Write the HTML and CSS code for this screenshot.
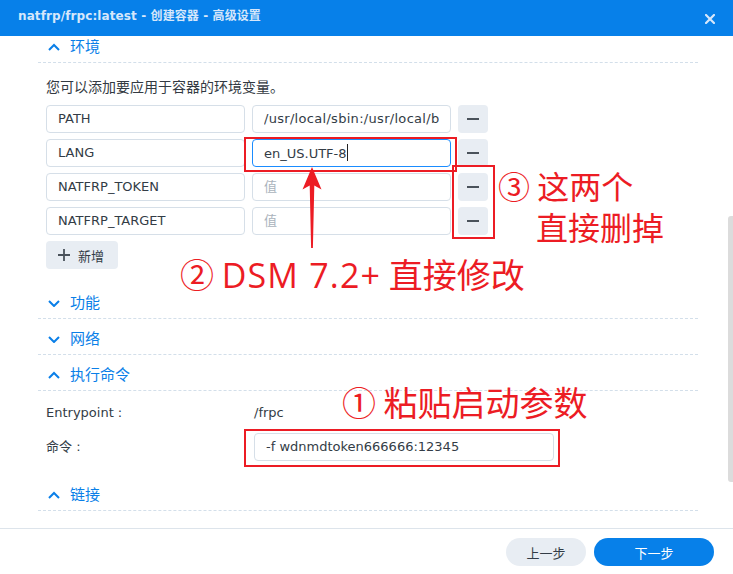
FILE: index.html
```html
<!DOCTYPE html>
<html lang="zh-CN">
<head>
<meta charset="utf-8">
<title>创建容器 - 高级设置</title>
<link rel="stylesheet" href="styles.css">
</head>
<body>
<div class="window">
  <header class="titlebar">
    <span class="title">natfrp/frpc:latest - 创建容器 - 高级设置</span>
    <svg class="close" viewBox="0 0 10 10" width="10" height="10"><path d="M1 1L9 9M9 1L1 9" stroke="currentColor" stroke-width="2.2" stroke-linecap="square"/></svg>
  </header>

  <main class="content">
    <div class="scroll">
      <section class="panel">
        <div class="panel-head"><svg class="chev" viewBox="0 0 12 8" width="12" height="8"><path d="M1 7L6 2L11 7" fill="none" stroke="currentColor" stroke-width="2"/></svg><span>环境</span></div>
        <div class="panel-body env">
          <p class="desc">您可以添加要应用于容器的环境变量。</p>
          <div class="env-list">
            <div class="env-row">
              <div class="field"><span class="val">PATH</span></div>
              <div class="field"><span class="val wide-val">/usr/local/sbin:/usr/local/bin:/usr/sbin:/usr/bin:/sbin:/bin</span></div>
              <button class="icon-btn"><span class="dash"></span></button>
            </div>
            <div class="env-row">
              <div class="field"><span class="val">LANG</span></div>
              <div class="field focus"><span class="val">en_US.UTF-8<span class="caret"></span></span></div>
              <button class="icon-btn"><span class="dash"></span></button>
            </div>
            <div class="env-row">
              <div class="field"><span class="val">NATFRP_TOKEN</span></div>
              <div class="field"><span class="val placeholder">值</span></div>
              <button class="icon-btn"><span class="dash"></span></button>
            </div>
            <div class="env-row">
              <div class="field"><span class="val">NATFRP_TARGET</span></div>
              <div class="field"><span class="val placeholder">值</span></div>
              <button class="icon-btn"><span class="dash"></span></button>
            </div>
          </div>
          <button class="add-btn"><svg viewBox="0 0 12 12" width="12" height="12"><path d="M6 0V12M0 6H12" stroke="currentColor" stroke-width="1.8"/></svg><span>新增</span></button>
        </div>
      </section>

      <section class="panel">
        <div class="panel-head"><svg class="chev" viewBox="0 0 12 8" width="12" height="8"><path d="M1 2L6 7L11 2" fill="none" stroke="currentColor" stroke-width="2"/></svg><span>功能</span></div>
      </section>

      <section class="panel">
        <div class="panel-head"><svg class="chev" viewBox="0 0 12 8" width="12" height="8"><path d="M1 2L6 7L11 2" fill="none" stroke="currentColor" stroke-width="2"/></svg><span>网络</span></div>
      </section>

      <section class="panel">
        <div class="panel-head"><svg class="chev" viewBox="0 0 12 8" width="12" height="8"><path d="M1 7L6 2L11 7" fill="none" stroke="currentColor" stroke-width="2"/></svg><span>执行命令</span></div>
        <div class="panel-body cmd">
          <div class="kv"><span class="k">Entrypoint :</span><span class="v">/frpc</span></div>
          <div class="kv"><span class="k">命令 :</span><div class="field wide"><span class="val">-f wdnmdtoken666666:12345</span></div></div>
        </div>
      </section>

      <section class="panel">
        <div class="panel-head"><svg class="chev" viewBox="0 0 12 8" width="12" height="8"><path d="M1 7L6 2L11 7" fill="none" stroke="currentColor" stroke-width="2"/></svg><span>链接</span></div>
      </section>
    </div>
    <div class="scroll-thumb"></div>
  </main>

  <footer class="footer">
    <button class="btn secondary">上一步</button>
    <button class="btn primary">下一步</button>
  </footer>

  <div class="mark box-lang"></div>
  <div class="mark box-minus"></div>
  <div class="mark box-cmd"></div>
  <svg class="arrow" viewBox="0 0 24 90" width="24" height="90"><path d="M12 6L21.5 28.5L14.3 24.5L12.9 87L11.1 87L9.7 24.5L2.5 28.5Z" fill="#ec1c24"/></svg>
  <div class="note note-2">② <span class="latin">DSM 7.2+</span> 直接修改</div>
  <div class="note note-3"><div>③ 这两个</div><div class="indent">直接删掉</div></div>
  <div class="note note-1">① 粘贴启动参数</div>
</div>
</body>
</html>
```

FILE: styles.css
```css
* { box-sizing: border-box; }
html, body { margin: 0; padding: 0; background: #fff; }
body {
  font-family: "DejaVu Sans", "Noto Sans CJK SC", sans-serif;
  font-size: 13px;
  color: #333c46;
}
.window {
  position: relative;
  width: 733px;
  height: 574px;
  display: flex;
  flex-direction: column;
  overflow: hidden;
  background: #fff;
}
.titlebar {
  flex: 0 0 36px;
  height: 36px;
  background: #0780e9;
  display: flex;
  align-items: center;
  justify-content: space-between;
  padding: 0 18px 5px 18px;
  color: #d6e7fb;
}
.title {
  font-size: 12px;
  font-weight: bold;
  line-height: 16px;
  white-space: nowrap;
  letter-spacing: 0.1px;
}
.close { display: block; margin-top: 6px; }

.content {
  position: relative;
  flex: 1 1 auto;
  overflow: hidden;
}
.scroll {
  margin-top: -9px;
  padding: 0 35px 0 38px;
}
.panel-head {
  height: 36px;
  border-bottom: 1px dashed #d3dfea;
  display: flex;
  align-items: center;
  gap: 10px;
  padding: 5px 0 0 10px;
  color: #0a7fe8;
  font-size: 15px;
  line-height: 20px;
}
.chev { display: block; }
.panel-body { padding: 14px 0 14px 8px; }
.desc {
  margin: 0 0 8px;
  font-size: 14px;
  line-height: 20px;
  color: #333a42;
}
.env-list {
  display: flex;
  flex-direction: column;
  gap: 6px;
}
.env-row {
  display: grid;
  grid-template-columns: 199px 199px 30px;
  column-gap: 7px;
  height: 28px;
}
.field {
  height: 28px;
  border: 1px solid #d6dfe8;
  border-radius: 4px;
  padding: 0 11px;
  display: flex;
  align-items: center;
  background: #fff;
}
.field.focus { border-color: #1a8cff; }
.val {
  display: block;
  width: 100%;
  overflow: hidden;
  white-space: nowrap;
  line-height: 18px;
  color: #333c46;
}
.wide-val { letter-spacing: 0.3px; }
.placeholder { color: #aab3bc; }
.caret {
  display: inline-block;
  width: 1px;
  height: 17px;
  background: #222;
  vertical-align: -3px;
}
.icon-btn {
  width: 30px;
  height: 28px;
  border: 0;
  padding: 0;
  border-radius: 4px;
  background: #e8edf3;
  display: flex;
  align-items: center;
  justify-content: center;
}
.dash {
  display: block;
  width: 12px;
  height: 2px;
  background: #4a525b;
}
.add-btn {
  margin-top: 6px;
  height: 28px;
  width: 72px;
  border: 0;
  border-radius: 4px;
  background: #e8edf3;
  display: flex;
  align-items: center;
  gap: 8px;
  padding: 0 0 0 12px;
  font-family: inherit;
  font-size: 13px;
  color: #333c46;
}
.add-btn svg { display: block; color: #4a525b; }

.panel-body.cmd {
  padding: 8px 0 14px 8px;
  display: flex;
  flex-direction: column;
  gap: 6px;
}
.kv {
  display: grid;
  grid-template-columns: 208px 300px;
  align-items: center;
  height: 28px;
}
.k, .v { line-height: 18px; color: #333c46; }
.field.wide { width: 300px; }

.scroll-thumb {
  position: absolute;
  right: 0;
  top: 180px;
  width: 5px;
  height: 266px;
  border-radius: 3px 0 0 3px;
  background: #dcdcdc;
}

.footer {
  flex: 0 0 46px;
  border-top: 1px solid #dde4eb;
  display: flex;
  justify-content: flex-end;
  align-items: flex-start;
  gap: 8px;
  padding: 9px 19px 0 0;
}
.btn {
  height: 28px;
  border: 0;
  border-radius: 14px;
  font-family: inherit;
  font-size: 13px;
  padding: 0;
}
.btn.secondary { width: 80px; background: #e8edf3; color: #333c46; }
.btn.primary { width: 120px; background: #0780e9; color: #fff; }

/* annotations */
.mark {
  position: absolute;
  border: 2px solid #ec1c24;
}
.box-lang { left: 244px; top: 137px; width: 213px; height: 35px; }
.box-minus { left: 452px; top: 165px; width: 43px; height: 74px; }
.box-cmd { left: 244px; top: 429px; width: 316px; height: 38px; }
.arrow { position: absolute; left: 300px; top: 161px; }
.note {
  position: absolute;
  font-family: "Noto Sans CJK SC", sans-serif;
  color: #ec1c24;
  white-space: nowrap;
  line-height: 1;
}
.note-2 { left: 180px; top: 257px; font-size: 34px; }
.note-2 .latin { font-family: "Open Sans", "Noto Sans CJK SC", sans-serif; letter-spacing: 1.2px; }
.note-3 { left: 498px; top: 165px; font-size: 32px; line-height: 41px; }
.note-3 div { line-height: 41px; }
.note-3 .indent { padding-left: 38px; }
.note-1 { left: 342px; top: 385px; font-size: 34px; }
```
